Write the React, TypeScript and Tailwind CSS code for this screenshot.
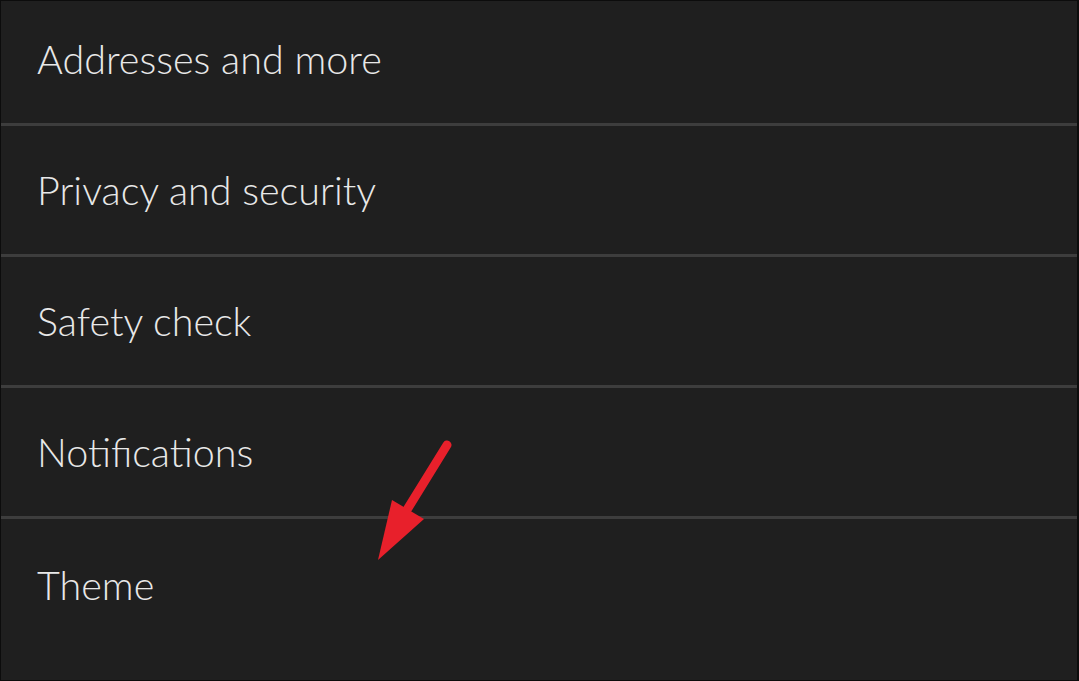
import React from "react";

const items = [
  "Addresses and more",
  "Privacy and security",
  "Safety check",
  "Notifications",
  "Theme",
];

export default function App() {
  return (
    <div className="relative h-[681px] w-[1079px] overflow-hidden border border-r-2 border-[#0c0c0c] bg-[#1f1f1f]" style={{ fontFamily: 'Lato, "Noto Sans", sans-serif' }}>
      <div className="flex flex-col">
        {items.map((t, i) => (
          <div
            key={t}
            className={`flex items-center px-[36px] text-[39.5px] font-light leading-none text-[#e8e8e8] ${i === 0 ? "h-[125px] pb-[6px]" : "h-[131px]"} ${i < items.length - 1 ? "border-b-[3px] border-[#3d3d3d]" : ""}`}
          >
            {t}
          </div>
        ))}
      </div>
      <svg className="absolute left-0 top-0" width="1079" height="681" viewBox="0 0 1079 681">
        <line x1="446" y1="444" x2="404" y2="512" stroke="#e8202b" strokeWidth="9" strokeLinecap="round" />
        <polygon points="391,499 423,518 377,559" fill="#e8202b" />
      </svg>
    </div>
  );
}
